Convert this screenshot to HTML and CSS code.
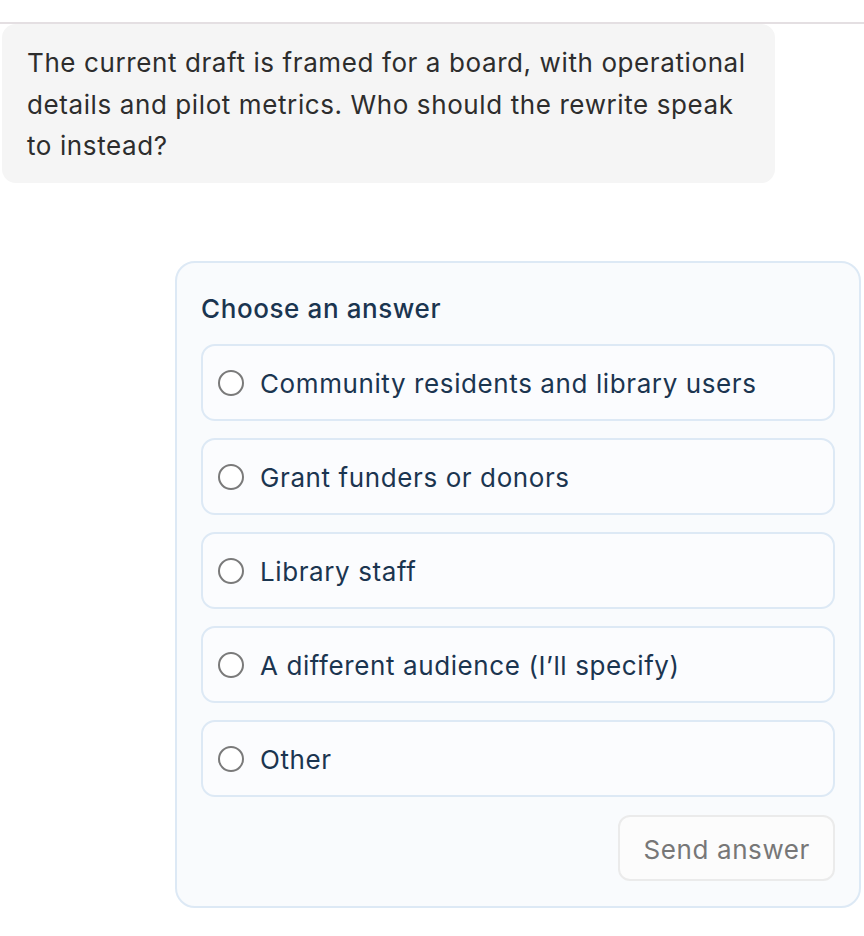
FILE: index.html
```html
<!DOCTYPE html>
<html lang="en">
<head>
<meta charset="utf-8">
<title>Choose an answer</title>
<link rel="stylesheet" href="styles.css">
</head>
<body>
<div class="page">
  <div class="divider"></div>
  <div class="bubble">
    <p>The current draft is framed for a board, with operational details and pilot metrics. Who should the rewrite speak to instead?</p>
  </div>
  <div class="card">
    <div class="card-title">Choose an answer</div>
    <div class="options">
      <label class="option"><span class="radio"></span><span class="label">Community residents and library users</span></label>
      <label class="option"><span class="radio"></span><span class="label">Grant funders or donors</span></label>
      <label class="option"><span class="radio"></span><span class="label">Library staff</span></label>
      <label class="option"><span class="radio"></span><span class="label">A different audience (I’ll specify)</span></label>
      <label class="option"><span class="radio"></span><span class="label">Other</span></label>
    </div>
    <div class="actions">
      <button class="send" type="button">Send answer</button>
    </div>
  </div>
</div>
</body>
</html>
```

FILE: styles.css
```css
* { box-sizing: border-box; }
html, body {
  margin: 0;
  padding: 0;
  background: #ffffff;
}
body {
  font-family: Inter, "Noto Sans", "Liberation Sans", sans-serif;
  font-size: 26px;
  line-height: 1.6;
  letter-spacing: 0.6px;
}
.page {
  width: 864px;
  padding-top: 22px;
  display: flex;
  flex-direction: column;
}
.divider {
  height: 2px;
  background: #e4dfe2;
}
.bubble {
  margin-left: 2px;
  width: 773px;
  background: #f5f5f5;
  border-radius: 14px;
  padding: 18px 26px 16px 25px;
  color: #2d2d2d;
}
.bubble p {
  margin: 0;
}
.card {
  margin-top: 78px;
  margin-left: 175px;
  width: 686px;
  background: #f9fbfd;
  border: 2px solid #dde9f5;
  border-radius: 20px;
  padding: 25px 24px 25px 24px;
  display: flex;
  flex-direction: column;
}
.card-title {
  color: #1b3550;
  font-weight: 500;
  margin-bottom: 15px;
}
.options {
  display: flex;
  flex-direction: column;
  gap: 17px;
}
.option {
  display: flex;
  align-items: center;
  height: 77px;
  border: 2px solid #dde9f5;
  border-radius: 14px;
  background: #fbfcfe;
  padding-left: 15px;
  padding-top: 2px;
  color: #1b3550;
}
.radio {
  width: 26px;
  height: 26px;
  border: 2px solid #7a7a7a;
  border-radius: 50%;
  background: #ffffff;
  flex: none;
  margin-top: -2px;
}
.label {
  margin-left: 16px;
}
.actions {
  display: flex;
  justify-content: flex-end;
  margin-top: 18px;
}
.send {
  font-family: inherit;
  font-size: 26px;
  line-height: 1.6;
  letter-spacing: 0.6px;
  color: #777777;
  background: #fcfcfc;
  border: 2px solid #ebebeb;
  border-radius: 12px;
  height: 66px;
  padding: 2px 23px 0 24px;
}
```
